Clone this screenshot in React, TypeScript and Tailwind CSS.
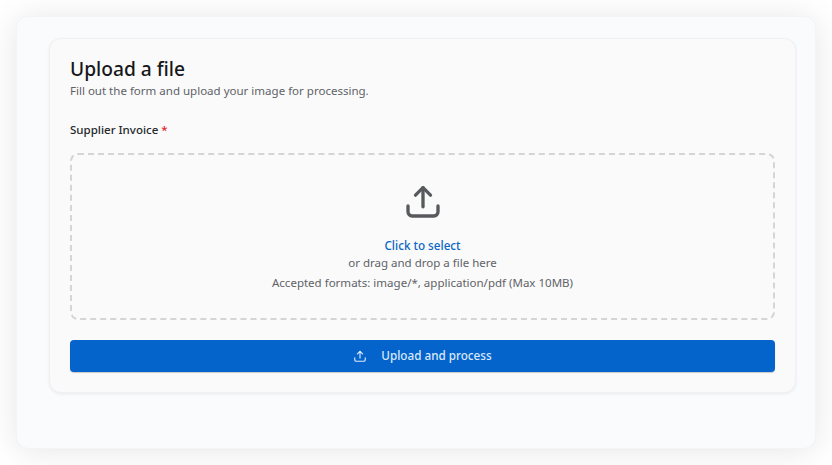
const fontStack = { fontFamily: '"Noto Sans", sans-serif' };

function UploadIcon({ className }: { className?: string }) {
  return (
    <svg viewBox="0 0 24 24" fill="none" stroke="currentColor" strokeWidth="2" strokeLinecap="round" strokeLinejoin="round" className={className}>
      <path d="M12 15.5V4" />
      <path d="M7.5 8.5 12 4l4.5 4.5" />
      <path d="M3 15v3.5A2.5 2.5 0 0 0 5.5 21h13a2.5 2.5 0 0 0 2.5-2.5V15" />
    </svg>
  );
}

export default function App() {
  return (
    <div style={fontStack} className="h-[465px] w-[832px] overflow-hidden bg-white px-[16px] pt-[16px]">
      <div className="h-[433px] w-[800px] rounded-[12px] border border-[#f3f4f6] bg-[#f9fbfd] px-[32px] pt-[21px] shadow-[0_2px_32px_rgba(0,0,0,0.1)]">
        <div className="h-[355px] w-[747px] rounded-[12px] border border-[#f0f1f2] bg-[#fafafa] px-[20px] pt-[17px] shadow-[0_1px_3px_rgba(0,0,0,0.07)]">
          <h1 className="text-[19.2px] font-medium leading-[26px] text-[#16181b]">Upload a file</h1>
          <p className="text-[11.52px] leading-[18px] text-[#5f6368]">Fill out the form and upload your image for processing.</p>
          <div className="mt-[21px] text-[11.52px] font-medium leading-[18px] text-[#26282b]">
            Supplier Invoice <span className="text-[#dc2626]">*</span>
          </div>
          <div className="mt-[14px] flex h-[167px] w-[705px] flex-col items-center rounded-[8px] border-2 border-dashed border-[#d4d5d7] pt-[26px]">
            <UploadIcon className="h-[40px] w-[40px] text-[#57595c]" />
            <div className="mt-[15px] text-[11.7px] font-medium leading-[18px] text-[#0a66c2]">Click to select</div>
            <div className="text-[11.52px] leading-[18px] text-[#5f6368]">or drag and drop a file here</div>
            <div className="mt-[2px] text-[11.52px] leading-[18px] text-[#5f6368]">Accepted formats: image/*, application/pdf (Max 10MB)</div>
          </div>
          <button className="mt-[20px] flex h-[32px] w-[705px] items-center justify-center gap-[14px] rounded-[4px] bg-[#0464cc] text-[11.7px] font-medium text-[#dbe9f8] shadow-[0_1px_1px_rgba(0,0,0,0.2)]">
            <UploadIcon className="h-[14px] w-[14px]" />
            Upload and process
          </button>
        </div>
      </div>
    </div>
  );
}
